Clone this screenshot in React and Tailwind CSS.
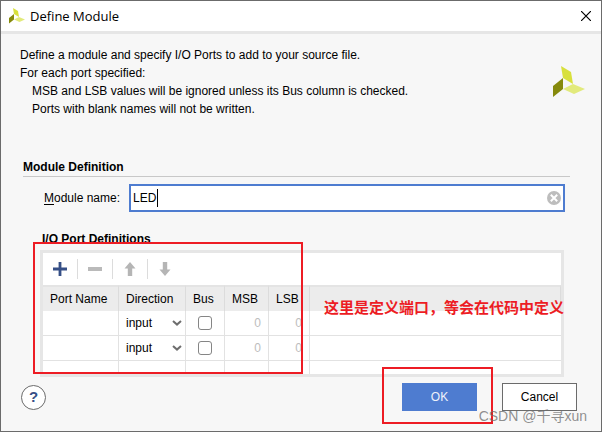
import { useState } from 'react'

const PORTS = [
  { id: 1, name: '', direction: 'input', bus: false, msb: 0, lsb: 0 },
  { id: 2, name: '', direction: 'input', bus: false, msb: 0, lsb: 0 },
]

function Logo({ className }) {
  return (
    <svg viewBox="0 0 32 32" className={className} aria-hidden="true">
      <path d="M8 0 L18 6 L20 18 L10 12 Z" fill="#d8e03c" />
      <path d="M0 20 L10 12 L10 23 L0 31 Z" fill="#868a0c" />
      <path d="M10 23 L20 18 L32 23 L21 28 Z" fill="#e2ea7c" />
    </svg>
  )
}

function ToolButton({ label, disabled, onClick, children }) {
  return (
    <button
      type="button"
      aria-label={label}
      disabled={disabled}
      onClick={onClick}
      className="flex h-5 w-[34px] items-center justify-center"
    >
      <svg viewBox="0 0 14 14" className="size-[14px]" aria-hidden="true">
        {children}
      </svg>
    </button>
  )
}

function Divider() {
  return <span className="h-5 w-px bg-[#dcdcdc]" />
}

function PortRow({ port, onChange }) {
  const cell = 'border-r border-b border-[#e2e2e2]'
  return (
    <tr className="h-[25px]">
      <td className={cell}>{port.name}</td>
      <td className={cell}>
        <div className="relative">
          <select
            aria-label="Direction"
            value={port.direction}
            onChange={(e) => onChange({ ...port, direction: e.target.value })}
            className="block h-6 w-full appearance-none bg-transparent pl-[7px]"
          >
            <option>input</option>
            <option>output</option>
            <option>inout</option>
          </select>
          <svg viewBox="0 0 10 6" className="pointer-events-none absolute top-[9px] right-[3px] h-[6px] w-[10px]" aria-hidden="true">
            <path d="M1 1 L5 4.6 L9 1" fill="none" stroke="#6e6e6e" strokeWidth="2" />
          </svg>
        </div>
      </td>
      <td className={cell}>
        <input
          type="checkbox"
          aria-label="Bus"
          checked={port.bus}
          onChange={(e) => onChange({ ...port, bus: e.target.checked })}
          className="mx-auto block size-[14px] appearance-none rounded-[3px] border border-[#858585] bg-white checked:bg-[#4e7cd0]"
        />
      </td>
      <td className={`${cell} pr-[7px] text-right text-[#bdbdbd]`}>{port.msb}</td>
      <td className={`${cell} pr-[7px] text-right text-[#bdbdbd]`}>{port.lsb}</td>
      <td className="border-b border-[#e2e2e2]" />
    </tr>
  )
}

export default function App() {
  const [moduleName, setModuleName] = useState('LED')
  const [ports, setPorts] = useState(PORTS)

  function updatePort(next) {
    setPorts(ports.map((p) => (p.id === next.id ? next : p)))
  }

  function addPort() {
    setPorts([...ports, { ...PORTS[0], id: ports.length + 1 }])
  }

  const head = 'border-t-2 border-r border-t-[#e4e4e4] border-r-[#dcdcdc] pl-[7px] text-left font-normal'

  return (
    <div className="relative flex min-h-screen flex-col border border-[#6b6b6b] bg-[#f7f7f7] font-['Liberation_Sans',Arial,sans-serif] text-[12px] leading-[18px] text-black">
      <header className="flex h-[33px] items-center border-b-3 border-[#e6e6e6] bg-white pr-[6px] pl-2">
        <Logo className="size-4" />
        <h1 className="ml-[5px] flex-1 font-['Open_Sans','Noto_Sans',sans-serif] text-[13px]">Define Module</h1>
        <button type="button" aria-label="Close" className="p-1">
          <svg viewBox="0 0 10 10" className="size-[10px]" aria-hidden="true">
            <path d="M0 0 L10 10 M10 0 L0 10" stroke="#000" strokeWidth="1.2" />
          </svg>
        </button>
      </header>

      <main className="flex flex-1 flex-col">
        <section className="flex items-start justify-between pt-3 pr-4 pl-[19px]">
          <div>
            <p>Define a module and specify I/O Ports to add to your source file.</p>
            <p>For each port specified:</p>
            <p className="pl-3">MSB and LSB values will be ignored unless its Bus column is checked.</p>
            <p className="pl-3">Ports with blank names will not be written.</p>
          </div>
          <Logo className="mt-5 size-8" />
        </section>

        <section className="mt-10 pr-[31px] pl-[22px]">
          <h2 className="border-b border-[#c8c8c8] font-bold">Module Definition</h2>

          <div className="mt-[7px] mr-[5px] ml-5 flex items-center">
            <label htmlFor="module-name" className="w-[86px] pl-px">
              <span className="underline underline-offset-2">M</span>odule name:
            </label>
            <div className="relative flex-1">
              <input
                id="module-name"
                value={moduleName}
                onChange={(e) => setModuleName(e.target.value)}
                className="peer block h-7 w-full border-2 border-[#4e7cd0] bg-white pr-6 pl-[2px] outline-none"
              />
              <span className="absolute top-[5px] left-7 h-[18px] w-px bg-black peer-focus:hidden" />
              <button
                type="button"
                aria-label="Clear"
                onClick={() => setModuleName('')}
                className="absolute top-[7px] right-1"
              >
                <svg viewBox="0 0 14 14" className="size-[14px]" aria-hidden="true">
                  <circle cx="7" cy="7" r="7" fill="#bdbdbd" />
                  <path d="M3.8 3.8 L10.2 10.2 M10.2 3.8 L3.8 10.2" stroke="#fff" strokeWidth="2" />
                </svg>
              </button>
            </div>
          </div>

          <h3 className="mt-[18px] pl-[19px] font-bold">I/O Port Definitions</h3>

          <div className="relative mt-[2px] mr-[6px] ml-[17px] border-3 border-[#e6e6e6] bg-white">
            <div className="flex h-8 items-center">
              <ToolButton label="Add port" onClick={addPort}>
                <path d="M7 0 V14 M0 7 H14" stroke="#364f86" strokeWidth="2.8" />
              </ToolButton>
              <Divider />
              <ToolButton label="Remove port" disabled>
                <path d="M0 7 H14" stroke="#bababa" strokeWidth="4" />
              </ToolButton>
              <Divider />
              <ToolButton label="Move up" disabled>
                <path d="M7 0 L12.5 6.5 H9.2 V14 H4.8 V6.5 H1.5 Z" fill="#b5b5b5" />
              </ToolButton>
              <Divider />
              <ToolButton label="Move down" disabled>
                <path d="M7 14 L12.5 7.5 H9.2 V0 H4.8 V7.5 H1.5 Z" fill="#b5b5b5" />
              </ToolButton>
            </div>

            <table className="w-full table-fixed border-separate border-spacing-0">
              <colgroup>
                <col className="w-[76px]" />
                <col className="w-[67px]" />
                <col className="w-[39px]" />
                <col className="w-[44px]" />
                <col className="w-[41px]" />
                <col />
              </colgroup>
              <thead>
                <tr className="h-[26px] bg-[#ececec]">
                  <th className={head}>Port Name</th>
                  <th className={head}>Direction</th>
                  <th className={head}>Bus</th>
                  <th className={head}>MSB</th>
                  <th className={head}>LSB</th>
                  <th className={head} />
                </tr>
              </thead>
              <tbody>
                {ports.map((port) => (
                  <PortRow key={port.id} port={port} onChange={updatePort} />
                ))}
                <tr className="h-[13px]">
                  <td className="border-r border-[#e2e2e2]" />
                  <td className="border-r border-[#e2e2e2]" />
                  <td className="border-r border-[#e2e2e2]" />
                  <td className="border-r border-[#e2e2e2]" />
                  <td className="border-r border-[#e2e2e2]" />
                  <td />
                </tr>
              </tbody>
            </table>

            <div className="pointer-events-none absolute -top-[11px] -left-[10px] h-[132px] w-[270px] border-2 border-[#ed1c24]" />
            <p className="pointer-events-none absolute top-[43px] left-[281px] font-['Noto_Sans_CJK_SC',sans-serif] text-[15px] leading-[22px] font-bold whitespace-nowrap text-[#ed1c24]">
              这里是定义端口，等会在代码中定义
            </p>
          </div>
        </section>

        <footer className="mt-[6px] flex items-center gap-[25px] pr-6 pl-5">
          <button
            type="button"
            aria-label="Help"
            className="mr-auto size-[25px] rounded-full border border-[#6b6b6b] bg-white text-[15px] leading-[22px] font-bold text-[#364f86]"
          >
            ?
          </button>
          <div className="relative">
            <button type="button" className="block h-7 w-[75px] bg-[#4e7cd0] text-[#eef2fa]">
              OK
            </button>
            <div className="pointer-events-none absolute -top-4 -left-5 h-[57px] w-[111px] border-2 border-[#ed1c24]" />
          </div>
          <button type="button" className="h-7 w-[75px] border border-[#6b6b6b] bg-white">
            Cancel
          </button>
        </footer>
      </main>

      <span className="pointer-events-none absolute right-[14px] bottom-[5px] font-['Liberation_Sans','Noto_Sans_CJK_SC',sans-serif] text-[14px] leading-[20px] text-[#6b6b6b]/75">
        CSDN @千寻xun
      </span>
    </div>
  )
}
